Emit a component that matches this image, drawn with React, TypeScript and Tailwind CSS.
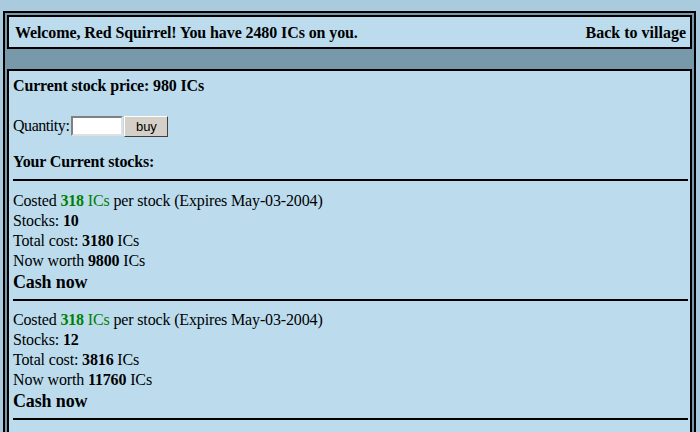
const SERIF = "font-['Liberation_Serif','Times_New_Roman',serif]";

const STOCKS = [
  { price: 318, count: 10, cost: 3180, worth: 9800, expires: "May-03-2004" },
  { price: 318, count: 12, cost: 3816, worth: 11760, expires: "May-03-2004" },
];

function Rule() {
  return <div className="h-[2px] bg-black" />;
}

export default function App() {
  return (
    <div className={`h-[432px] w-[700px] overflow-hidden bg-[#aacbdd] pl-[3px] pt-[11px] text-[16px] tracking-[-0.15px] text-black ${SERIF}`}>
      <div className="w-[693px] border-2 border-black bg-[#7899aa] p-[2px]">
        {/* header */}
        <div className="flex h-[34px] items-center justify-between border-2 border-black bg-[#bcdcee] pl-[6px] pr-[4px] pt-[1px] font-bold">
          <span className="tracking-[-0.1px]">
            Welcome, Red Squirrel! You have 2480 ICs on you.
          </span>
          <span className="tracking-normal">Back to village</span>
        </div>

        {/* content */}
        <div className="mt-[20px] h-[400px] border-2 border-black bg-[#bcdcee] pl-[4px] pr-[2px] pt-[5px] leading-[20px]">
          <div className="h-[20px] font-bold">Current stock price: 980 ICs</div>
          <div className="mt-[20px] flex h-[20px] items-center">
            <span className="tracking-[-0.45px]">Quantity:</span>
            <input
              className="ml-[2px] h-[20px] w-[52px] border-2 border-t-[#808080] border-l-[#808080] border-r-[#e0e0e0] border-b-[#e0e0e0] bg-white outline-none"
              type="text"
            />
            <button className="ml-[1px] h-[21px] w-[44px] border border-t-white border-l-white border-r-[#404040] border-b-[#404040] bg-[#d4d0c8] font-['Liberation_Sans',Arial,sans-serif] text-[13px] leading-[19px] tracking-normal">
              buy
            </button>
          </div>
          <div className="mt-[16px] h-[20px] font-bold">Your Current stocks:</div>
          <div className="mt-[-1px] pb-[10px] pt-[8px]">
            <Rule />
          </div>
          {STOCKS.map((s, i) => (
            <div key={i}>
              <div className="h-[20px]">
                Costed <b className="text-[#008000]">{s.price}</b>{" "}
                <span className="text-[#008000]">ICs</span> per stock (Expires {s.expires})
              </div>
              <div className="h-[20px]">
                Stocks: <b>{s.count}</b>
              </div>
              <div className="h-[20px]">
                Total cost: <b>{s.cost}</b> ICs
              </div>
              <div className="h-[20px]">
                Now worth <b>{s.worth}</b> ICs
              </div>
              <div className="h-[22px] text-[18px] font-bold leading-[22px]">Cash now</div>
              <div className="pb-[9px] pt-[6px]">
                <Rule />
              </div>
            </div>
          ))}
        </div>
      </div>
    </div>
  );
}
